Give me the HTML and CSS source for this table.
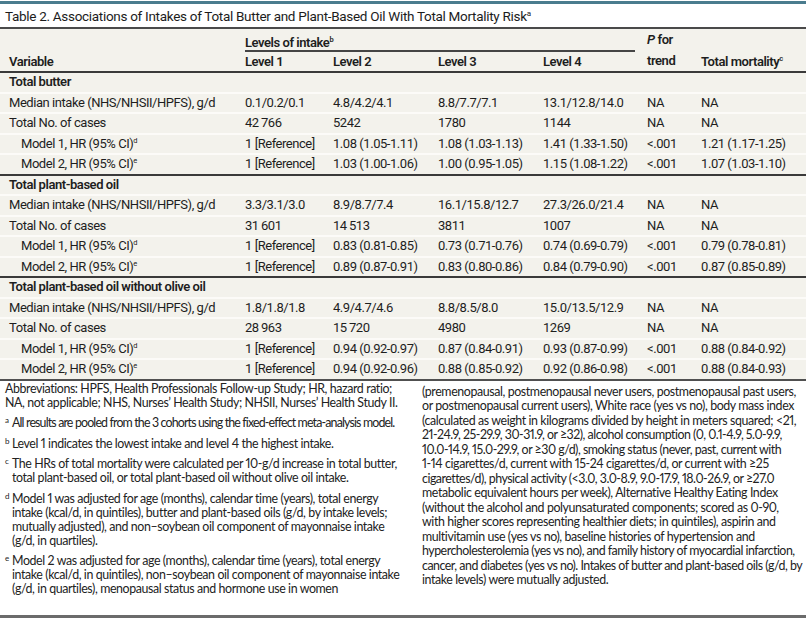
FILE: index.html
```html
<!DOCTYPE html>
<html lang="en">
<head>
<meta charset="utf-8">
<title>Table 2</title>
<link rel="stylesheet" href="styles.css">
</head>
<body>
<div class="page">
  <div class="title">Table 2. Associations of Intakes of Total Butter and Plant-Based Oil With Total Mortality Risk<sup>a</sup></div>
  <table class="data">
    <colgroup>
      <col class="c-var"><col class="c-l1"><col class="c-l2"><col class="c-l3"><col class="c-l4"><col class="c-p"><col class="c-tm">
    </colgroup>
    <thead>
      <tr class="h1">
        <th rowspan="2" class="var">Variable</th>
        <th colspan="4" class="levels"><div class="levels-rule">Levels of intake<sup>b</sup></div></th>
        <th rowspan="2" class="ptrend"><i>P</i> for<br>trend</th>
        <th rowspan="2" class="tm">Total mortality<sup>c</sup></th>
      </tr>
      <tr class="h2">
        <th>Level 1</th><th>Level 2</th><th>Level 3</th><th>Level 4</th>
      </tr>
    </thead>
    <tbody>
      <tr class="sec"><td colspan="7">Total butter</td></tr>
      <tr><td>Median intake (NHS/NHSII/HPFS), g/d</td><td>0.1/0.2/0.1</td><td>4.8/4.2/4.1</td><td>8.8/7.7/7.1</td><td>13.1/12.8/14.0</td><td>NA</td><td>NA</td></tr>
      <tr><td>Total No. of cases</td><td>42&#8201;766</td><td>5242</td><td>1780</td><td>1144</td><td>NA</td><td>NA</td></tr>
      <tr><td class="ind">Model 1, HR (95% CI)<sup>d</sup></td><td>1 [Reference]</td><td>1.08 (1.05-1.11)</td><td>1.08 (1.03-1.13)</td><td>1.41 (1.33-1.50)</td><td>&lt;.001</td><td>1.21 (1.17-1.25)</td></tr>
      <tr class="last"><td class="ind">Model 2, HR (95% CI)<sup>e</sup></td><td>1 [Reference]</td><td>1.03 (1.00-1.06)</td><td>1.00 (0.95-1.05)</td><td>1.15 (1.08-1.22)</td><td>&lt;.001</td><td>1.07 (1.03-1.10)</td></tr>
    </tbody>
    <tbody>
      <tr class="sec"><td colspan="7">Total plant-based oil</td></tr>
      <tr><td>Median intake (NHS/NHSII/HPFS), g/d</td><td>3.3/3.1/3.0</td><td>8.9/8.7/7.4</td><td>16.1/15.8/12.7</td><td>27.3/26.0/21.4</td><td>NA</td><td>NA</td></tr>
      <tr><td>Total No. of cases</td><td>31&#8201;601</td><td>14&#8201;513</td><td>3811</td><td>1007</td><td>NA</td><td>NA</td></tr>
      <tr><td class="ind">Model 1, HR (95% CI)<sup>d</sup></td><td>1 [Reference]</td><td>0.83 (0.81-0.85)</td><td>0.73 (0.71-0.76)</td><td>0.74 (0.69-0.79)</td><td>&lt;.001</td><td>0.79 (0.78-0.81)</td></tr>
      <tr class="last"><td class="ind">Model 2, HR (95% CI)<sup>e</sup></td><td>1 [Reference]</td><td>0.89 (0.87-0.91)</td><td>0.83 (0.80-0.86)</td><td>0.84 (0.79-0.90)</td><td>&lt;.001</td><td>0.87 (0.85-0.89)</td></tr>
    </tbody>
    <tbody>
      <tr class="sec"><td colspan="7">Total plant-based oil without olive oil</td></tr>
      <tr><td>Median intake (NHS/NHSII/HPFS), g/d</td><td>1.8/1.8/1.8</td><td>4.9/4.7/4.6</td><td>8.8/8.5/8.0</td><td>15.0/13.5/12.9</td><td>NA</td><td>NA</td></tr>
      <tr><td>Total No. of cases</td><td>28&#8201;963</td><td>15&#8201;720</td><td>4980</td><td>1269</td><td>NA</td><td>NA</td></tr>
      <tr><td class="ind">Model 1, HR (95% CI)<sup>d</sup></td><td>1 [Reference]</td><td>0.94 (0.92-0.97)</td><td>0.87 (0.84-0.91)</td><td>0.93 (0.87-0.99)</td><td>&lt;.001</td><td>0.88 (0.84-0.92)</td></tr>
      <tr class="last final"><td class="ind">Model 2, HR (95% CI)<sup>e</sup></td><td>1 [Reference]</td><td>0.94 (0.92-0.96)</td><td>0.88 (0.85-0.92)</td><td>0.92 (0.86-0.98)</td><td>&lt;.001</td><td>0.88 (0.84-0.93)</td></tr>
    </tbody>
  </table>
  <div class="notes">
    <div class="col left">
      <p class="abbr"><span class="ln">Abbreviations: HPFS, Health Professionals Follow-up Study; HR, hazard ratio;</span><span class="ln">NA, not applicable; NHS, Nurses’ Health Study; NHSII, Nurses’ Health Study II.</span></p>
      <p class="fn"><span class="ln tight"><sup>a</sup>All results are pooled from the 3 cohorts using the fixed-effect meta-analysis model.</span></p>
      <p class="fn"><span class="ln"><sup>b</sup>Level 1 indicates the lowest intake and level 4 the highest intake.</span></p>
      <p class="fn"><span class="ln"><sup>c</sup>The HRs of total mortality were calculated per 10-g/d increase in total butter,</span><span class="ln">total plant-based oil, or total plant-based oil without olive oil intake.</span></p>
      <p class="fn"><span class="ln"><sup>d</sup>Model 1 was adjusted for age (months), calendar time (years), total energy</span><span class="ln">intake (kcal/d, in quintiles), butter and plant-based oils (g/d, by intake levels;</span><span class="ln">mutually adjusted), and non–soybean oil component of mayonnaise intake</span><span class="ln">(g/d, in quartiles).</span></p>
      <p class="fn"><span class="ln"><sup>e</sup>Model 2 was adjusted for age (months), calendar time (years), total energy</span><span class="ln">intake (kcal/d, in quintiles), non–soybean oil component of mayonnaise intake</span><span class="ln">(g/d, in quartiles), menopausal status and hormone use in women</span></p>
    </div>
    <div class="col right">
      <p class="cont"><span class="ln">(premenopausal, postmenopausal never users, postmenopausal past users,</span><span class="ln">or postmenopausal current users), White race (yes vs no), body mass index</span><span class="ln">(calculated as weight in kilograms divided by height in meters squared; &lt;21,</span><span class="ln dense">21-24.9, 25-29.9, 30-31.9, or ≥32), alcohol consumption (0, 0.1-4.9, 5.0-9.9,</span><span class="ln dense">10.0-14.9, 15.0-29.9, or ≥30 g/d), smoking status (never, past, current with</span><span class="ln">1-14 cigarettes/d, current with 15-24 cigarettes/d, or current with ≥25</span><span class="ln dense">cigarettes/d), physical activity (&lt;3.0, 3.0-8.9, 9.0-17.9, 18.0-26.9, or ≥27.0</span><span class="ln">metabolic equivalent hours per week), Alternative Healthy Eating Index</span><span class="ln">(without the alcohol and polyunsaturated components; scored as 0-90,</span><span class="ln">with higher scores representing healthier diets; in quintiles), aspirin and</span><span class="ln">multivitamin use (yes vs no), baseline histories of hypertension and</span><span class="ln dense">hypercholesterolemia (yes vs no), and family history of myocardial infarction,</span><span class="ln dense">cancer, and diabetes (yes vs no). Intakes of butter and plant-based oils (g/d, by</span><span class="ln">intake levels) were mutually adjusted.</span></p>
    </div>
  </div>
</div>
</body>
</html>
```

FILE: styles.css
```css
html, body {
  margin: 0;
  padding: 0;
  background: #ffffff;
}
body {
  font-family: Roboto, "Liberation Sans", sans-serif;
  color: #1e1e1e;
}
.page {
  width: 806px;
  height: 621px;
  overflow: hidden;
}
.title {
  border-top: 3px solid #4a7c8e;
  margin-top: 1px;
  padding: 4px 0 0 5px;
  height: 19px;
  font-size: 13.5px;
  letter-spacing: -0.3px;
  line-height: 17px;
  color: #1c1c1c;
  white-space: nowrap;
  border-bottom: 2px solid #4a4a4a;
}
.title sup {
  font-size: 8px;
  vertical-align: 5px;
  line-height: 0;
}
.data {
  width: 806px;
  border-collapse: collapse;
  table-layout: fixed;
  background: #f3f2ec;
  font-size: 13px;
  letter-spacing: -0.45px;
}
.c-var { width: 241px; }
.c-l1 { width: 88px; }
.c-l2 { width: 105px; }
.c-l3 { width: 105px; }
.c-l4 { width: 104px; }
.c-p { width: 54px; }
.c-tm { width: 109px; }
.data th {
  text-align: left;
  font-weight: 600;
  padding: 0 0 0 4px;
  vertical-align: bottom;
  white-space: nowrap;
  line-height: 19px;
}
.data th.var, .data td:first-child {
  padding-left: 9px;
}
.data thead {
  border-bottom: 2px solid #3a3a3a;
}
.h1 th.levels {
  height: 23px;
  padding-right: 8px;
}
.levels-rule {
  line-height: 12px;
  padding-bottom: 1px;
  border-bottom: 2px solid #454545;
}
.h2 th {
  height: 19px;
}
.data th.ptrend {
  line-height: 21px;
}
.data th.ptrend i {
  font-style: italic;
}
sup {
  font-size: 7.5px;
  line-height: 0;
  vertical-align: 5px;
  font-weight: 400;
}
.data th sup {
  font-weight: 600;
}
.data td {
  padding: 0 0 0 4px;
  line-height: 18.5px;
  border-bottom: 2px solid #fcfbf8;
  white-space: nowrap;
}
.data td.ind {
  padding-left: 21px;
}
.data tr.sec td {
  font-weight: 600;
}
.data tr.last td {
  border-bottom: 2px solid #3a3a3a;
}
.data tr.final td {
  border-bottom: 2px solid #505050;
}
.notes {
  display: flex;
  gap: 19px;
  padding-left: 5px;
  height: 234px;
  border-bottom: 3px solid #6b6b6b;
  font-family: Lato, "Open Sans", sans-serif;
  font-size: 12.4px;
  letter-spacing: -0.4px;
  font-variant-numeric: proportional-nums;
  color: #222;
}
.col {
  width: 391px;
  flex: none;
}
.notes p {
  margin: 0;
  white-space: nowrap;
}
.ln {
  display: block;
  line-height: 14px;
}
.left {
  padding-top: 1px;
}
.right {
  padding-top: 4px;
}
.right .ln {
  line-height: 14.5px;
}
.notes p.fn {
  margin-top: 6.5px;
  padding-left: 7px;
}
.notes p.fn sup {
  display: inline-block;
  width: 7px;
  margin-left: -7px;
  font-size: 8px;
  vertical-align: 4px;
}
.notes .tight {
  letter-spacing: -0.85px;
}
.notes .dense {
  letter-spacing: -0.5px;
}
.notes p.cont {
  padding-left: 7px;
}
```
